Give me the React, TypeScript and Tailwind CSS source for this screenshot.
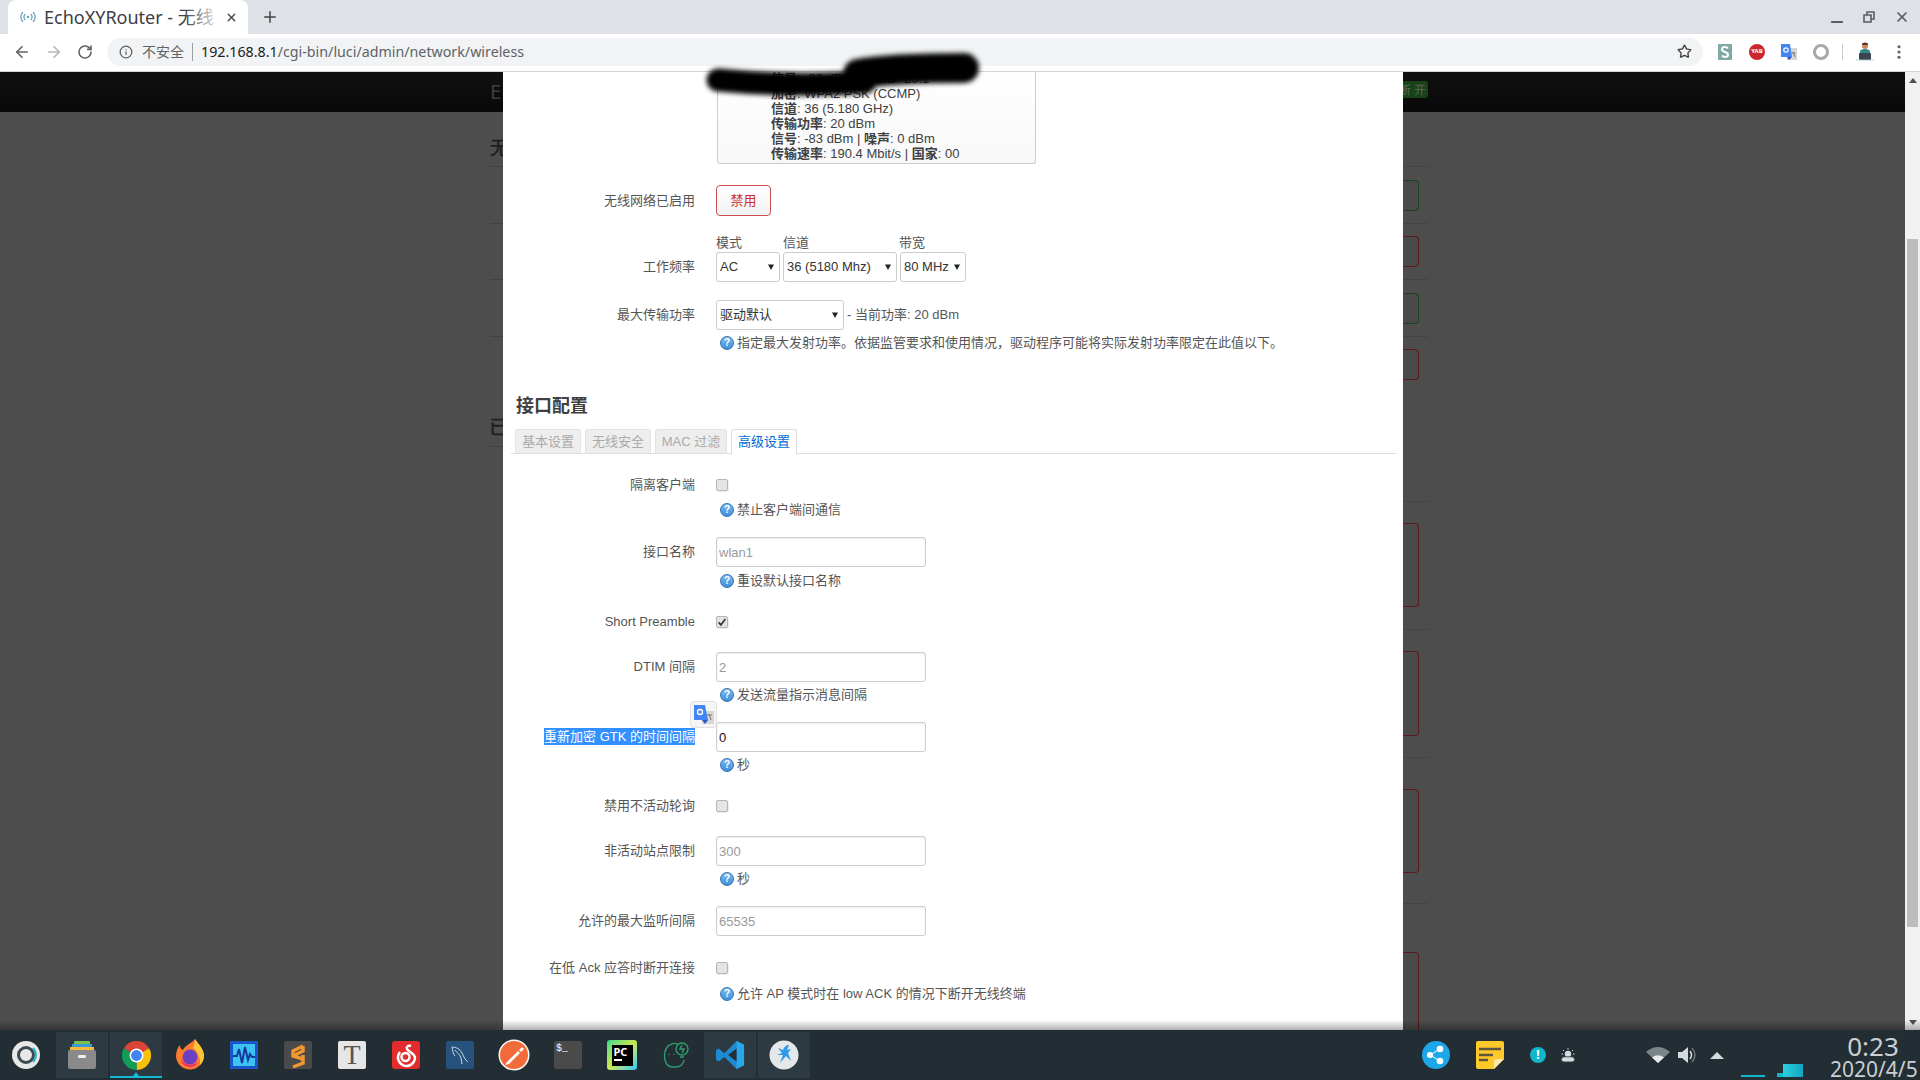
import type { ReactNode } from "react";
import { ArrowLeft, ArrowRight, RotateCw, Info, Star, Minus, X, Plus } from "lucide-react";

// Small help bubble used under most of the form fields
function HelpIcon() {
  return (
    <span className="flex h-[14px] w-[14px] shrink-0 items-center justify-center rounded-full border border-[#2f74b5] bg-gradient-to-b from-[#7db8ec] to-[#3f8fdc] text-[10px] leading-none font-bold text-white">
      ?
    </span>
  );
}

function Help({ className, children }: { className: string; children: ReactNode }) {
  return (
    <div className={`ml-[217px] flex h-4 items-center gap-[3px] text-[13px] whitespace-nowrap text-[#555] ${className}`}>
      <HelpIcon />
      <span>{children}</span>
    </div>
  );
}

function Row({ label, className, children }: { label: ReactNode; className: string; children: ReactNode }) {
  return (
    <div className={`flex items-center ${className}`}>
      <div className="w-[192px] shrink-0 text-right text-[13px] whitespace-nowrap text-[#555]">{label}</div>
      <div className="ml-[21px] flex items-center">{children}</div>
    </div>
  );
}

function Checkbox({ checked }: { checked?: boolean }) {
  return (
    <span className="flex h-[12px] w-[12px] items-center justify-center rounded-[2px] border border-[#b5b5b5] bg-[#e4e4e4] shadow-[1px_1px_0_#eee]">
      {checked && (
        <svg viewBox="0 0 12 12" className="h-[10px] w-[10px]">
          <path d="M2 6.5 4.7 9.5 10 2.5" fill="none" stroke="#333" strokeWidth="2" />
        </svg>
      )}
    </span>
  );
}

function TextBox({ value, placeholder }: { value?: string; placeholder?: string }) {
  return (
    <input
      readOnly
      value={value}
      placeholder={placeholder}
      className="h-[30px] w-[210px] rounded-[3px] border border-[#ccc] bg-white px-[2px] text-[13px] text-[#111] shadow-[inset_0_1px_2px_rgba(0,0,0,0.08)] outline-none placeholder:text-[#999]"
    />
  );
}

function SelectBox({ text, width }: { text: string; width: string }) {
  return (
    <div className={`flex h-[30px] items-center justify-between rounded-[3px] border border-[#ccc] bg-white pr-[4px] pl-[3px] text-[13px] whitespace-nowrap text-[#333] ${width}`}>
      <span>{text}</span>
      <svg viewBox="0 0 8 8" className="h-[8px] w-[8px]">
        <path d="M1 1.5h6L4 7z" fill="#222" />
      </svg>
    </div>
  );
}

function TabBtn({ text, width, active }: { text: string; width: string; active?: boolean }) {
  return (
    <div
      className={
        active
          ? `-mb-px flex h-[25px] items-center justify-center rounded-t-[3px] border border-b-0 border-[#ddd] bg-white text-[13px] text-[#0069d6] ${width}`
          : `flex h-[24px] items-center justify-center rounded-t-[3px] border border-b-0 border-[#e4e4e4] bg-[#eee] text-[13px] text-[#aaa] ${width}`
      }
    >
      {text}
    </div>
  );
}

function TabStrip() {
  return (
    <div className="flex h-[34px] items-end bg-[#dee1e6] pl-[8px] font-['Noto_Sans','Noto_Sans_CJK_SC',sans-serif]">
      <div className="relative flex h-[34px] w-[240px] items-center rounded-t-lg bg-white pl-[12px]">
        <svg viewBox="0 0 16 16" className="h-4 w-4" fill="none" stroke="#6fa6b8" strokeWidth="1.3">
          <circle cx="8" cy="8" r="1.3" fill="#6fa6b8" stroke="none" />
          <path d="M5.3 5a4 4 0 0 0 0 6M10.7 5a4 4 0 0 1 0 6M3 3a7 7 0 0 0 0 10M13 3a7 7 0 0 1 0 10" />
        </svg>
        <div className="ml-[8px] w-[174px] overflow-hidden text-[18px] whitespace-nowrap text-[#3c4043]">EchoXYRouter - 无线</div>
        <div className="absolute top-0 left-[176px] h-[34px] w-[38px] bg-gradient-to-r from-white/0 to-white" />
        <X className="absolute top-[11px] left-[217px] h-[13px] w-[13px] text-[#444]" strokeWidth={2.6} />
      </div>
      <Plus className="mb-[8px] ml-[13px] h-[18px] w-[18px] text-[#444]" strokeWidth={2} />
      <div className="ml-auto flex h-[34px] items-start text-[#5a5d62]">
        <Minus className="mt-[13px] h-[18px] w-[18px]" strokeWidth={2.4} />
        <svg viewBox="0 0 12 12" className="mt-[11px] ml-[17px] h-[12px] w-[12px]" fill="none" stroke="#5a5d62" strokeWidth="1.6">
          <path d="M1 4h7v7H1zM4 4V1h7v7H8" />
        </svg>
        <X className="mt-[9px] mr-[10px] ml-[19px] h-[16px] w-[16px]" strokeWidth={2.6} />
      </div>
    </div>
  );
}

function Toolbar() {
  return (
    <div className="flex h-[38px] items-center border-b border-[#d4d4d4] bg-white pb-[2px] font-['Noto_Sans','Noto_Sans_CJK_SC',sans-serif]">
      <ArrowLeft className="ml-[13px] h-[18px] w-[18px] text-[#5f6368]" strokeWidth={2.2} />
      <ArrowRight className="ml-[14px] h-[18px] w-[18px] text-[#b4b6b9]" strokeWidth={2.2} />
      <RotateCw className="ml-[14px] h-[16px] w-[16px] text-[#5f6368]" strokeWidth={2.4} />
      <div className="ml-[14px] flex h-[28px] w-[1596px] items-center rounded-full bg-[#f1f3f4] pr-[11px] pl-[12px]">
        <Info className="h-[14px] w-[14px] text-[#5f6368]" strokeWidth={2.2} />
        <span className="ml-[9px] text-[14px] text-[#5f6368]">不安全</span>
        <span className="ml-[8px] h-[18px] w-px bg-[#9aa0a6]" />
        <span className="ml-[8px] text-[14.25px] text-[#202124]">
          192.168.8.1<span className="text-[#5f6368]">/cgi-bin/luci/admin/network/wireless</span>
        </span>
        <Star className="ml-auto h-[15px] w-[15px] text-[#444]" strokeWidth={2.2} />
      </div>
      {/* extension icons */}
      <svg viewBox="0 0 16 16" className="ml-[14px] h-4 w-4">
        <rect width="14" height="16" x="1" fill="#7fa8a6" rx="1" />
        <path d="M11 4.5Q10 3 8 3 5 3 5 5.2 5 7 8 8t3 2.8Q11 13 8 13 6 13 5 11.5" fill="none" stroke="#fff" strokeWidth="2" />
      </svg>
      <span className="ml-[16px] flex h-4 w-4 items-center justify-center rounded-full bg-[#c9282d] text-[6px] font-bold text-white">YAB</span>
      <svg viewBox="0 0 16 16" className="ml-[16px] h-4 w-4">
        <rect x="6" y="4" width="10" height="12" fill="#d6d6d6" />
        <path d="M0 0h9l2 13H0z" fill="#4285f4" />
        <path d="M6 13h5l-3 3z" fill="#2a56c6" />
        <circle cx="5" cy="6" r="2.2" fill="none" stroke="#fff" strokeWidth="1.2" />
        <path d="M12 8l2 5M14.5 9h-4" stroke="#777" strokeWidth="1" />
      </svg>
      <span className="ml-[16px] h-4 w-4 rounded-full border-[3px] border-[#a8a8a8] bg-white" />
      <span className="ml-[13px] h-[16px] w-px bg-[#ccc]" />
      <svg viewBox="0 0 20 20" className="ml-[12px] h-[20px] w-[20px]">
        <circle cx="10" cy="4" r="3" fill="#c98b5e" />
        <path d="M7 3a3 2.4 0 0 1 6 0z" fill="#5a3521" />
        <path d="M5 15V10q0-3 5-3t5 3v5z" fill="#2b8a8a" />
        <rect x="4" y="11" width="12" height="7" rx="1" fill="#3c4650" />
        <path d="M1 18h18" stroke="#a9c6c9" strokeWidth="0.8" />
      </svg>
      <svg viewBox="0 0 4 16" className="ml-[22px] h-[14px] w-[4px]" fill="#5f6368">
        <circle cx="2" cy="2" r="1.8" />
        <circle cx="2" cy="8" r="1.8" />
        <circle cx="2" cy="14" r="1.8" />
      </svg>
    </div>
  );
}

// What shows of the dimmed page to the left of the dialog
function BackdropLeft() {
  return (
    <div className="h-full w-[503px] shrink-0 overflow-hidden bg-[#4d4d4d] pl-[490px]">
      <div className="-ml-[490px] h-[40px] w-[503px] bg-gradient-to-b from-[#101010] to-[#090909] pt-[6px] pl-[490px] text-[20px] leading-[28px] text-[#3e3e3e]">
        E
      </div>
      <div className="mt-[23px] h-[31px] w-[30px] text-[18px] leading-[24px] font-bold text-[#1f1f1f]">无</div>
      <div className="h-px bg-[#404040]" />
      <div className="mt-[56px] h-px bg-[#404040]" />
      <div className="mt-[55px] h-px bg-[#404040]" />
      <div className="mt-[56px] h-px bg-[#404040]" />
      <div className="mt-[77px] h-[32px] w-[30px] text-[18px] leading-[24px] font-bold text-[#1f1f1f]">已</div>
      <div className="h-px bg-[#404040]" />
    </div>
  );
}

const Line = ({ className }: { className: string }) => <div className={`h-px w-[25px] bg-[#444] ${className}`} />;

const Card = ({ className }: { className: string }) => (
  <div className={`w-[16px] rounded-r-[4px] border-y border-r bg-[#4a4a4a] ${className}`} />
);

// Same for the right side of the dialog, with the clipped status buttons
function BackdropRight() {
  return (
    <div className="h-full w-[502px] shrink-0 overflow-hidden bg-[#4d4d4d]">
      <div className="flex h-[40px] bg-gradient-to-b from-[#101010] to-[#090909] pt-[9px]">
        <div className="flex h-[17px] w-[25px] items-center justify-end overflow-hidden rounded-r-[3px] bg-[#17421a] pr-[2px] text-[12px] whitespace-nowrap text-[#5d6b5d]">
          断 开
        </div>
      </div>
      <Line className="mt-[54px]" />
      <Card className="mt-[13px] h-[31px] border-[#1c451c]" />
      <Line className="mt-[12px]" />
      <Card className="mt-[12px] h-[31px] border-[#5c1a1a]" />
      <Line className="mt-[12px]" />
      <Card className="mt-[13px] h-[31px] border-[#1c451c]" />
      <Line className="mt-[12px]" />
      <Card className="mt-[12px] h-[31px] border-[#5c1a1a]" />
      <Line className="mt-[121px]" />
      <Card className="mt-[21px] h-[84px] border-[#5c1a1a]" />
      <Line className="mt-[22px]" />
      <Card className="mt-[21px] h-[85px] border-[#5c1a1a]" />
      <Line className="mt-[21px]" />
      <Card className="mt-[31px] h-[84px] border-[#5c1a1a]" />
      <Line className="mt-[30px]" />
      <Card className="mt-[48px] h-[200px] border-[#5c1a1a]" />
    </div>
  );
}

function Dialog() {
  return (
    <div className="h-full w-[900px] shrink-0 overflow-hidden bg-white font-['Liberation_Sans','Noto_Sans_CJK_SC',sans-serif]">
      {/* status box, scrolled partly out of view */}
      <div className="-mt-px ml-[214px] h-[93px] w-[319px] rounded-b-[3px] border-x border-b border-[#ccc] bg-gradient-to-b from-white to-[#f8f8f8] pl-[53px] text-[13px] leading-[15px] whitespace-nowrap text-[#404040]">
        <div>
          <b>信号</b>: -83 dBm <b>BSSID</b>: 20:1
        </div>
        <div>
          <b>加密</b>: WPA2 PSK (CCMP)
        </div>
        <div>
          <b>信道</b>: 36 (5.180 GHz)
        </div>
        <div>
          <b>传输功率</b>: 20 dBm
        </div>
        <div>
          <b>信号</b>: -83 dBm | <b>噪声</b>: 0 dBm
        </div>
        <div>
          <b>传输速率</b>: 190.4 Mbit/s | <b>国家</b>: 00
        </div>
      </div>

      <Row label="无线网络已启用" className="mt-[21px] h-[31px]">
        <button className="h-[31px] w-[55px] rounded-[4px] border border-[#c9504f] bg-gradient-to-b from-white to-[#f3f3f3] text-[13px] text-[#c9302c]">
          禁用
        </button>
      </Row>

      <div className="mt-[18px] flex items-end">
        <div className="flex h-[30px] w-[192px] items-center justify-end text-[13px] text-[#555]">工作频率</div>
        <div className="ml-[21px] flex gap-[3px]">
          <div className="w-[64px] text-[13px] leading-[18px] text-[#555]">
            模式
            <SelectBox text="AC" width="w-[64px]" />
          </div>
          <div className="w-[114px] text-[13px] leading-[18px] text-[#555]">
            信道
            <SelectBox text="36 (5180 Mhz)" width="w-[114px]" />
          </div>
          <div className="w-[66px] text-[13px] leading-[18px] text-[#555]">
            <span className="-ml-px">带宽</span>
            <SelectBox text="80 MHz" width="w-[66px]" />
          </div>
        </div>
      </div>

      <Row label="最大传输功率" className="mt-[18px] h-[30px]">
        <SelectBox text="驱动默认" width="w-[128px]" />
        <span className="ml-[3px] text-[13px] whitespace-nowrap text-[#555]">- 当前功率: 20 dBm</span>
      </Row>
      <Help className="mt-[5px]">指定最大发射功率。依据监管要求和使用情况，驱动程序可能将实际发射功率限定在此值以下。</Help>

      <h3 className="mt-[43px] ml-[13px] text-[18px] leading-[24px] font-bold text-[#404040]">接口配置</h3>

      <div className="mt-[11px] ml-[8px] flex h-[25px] w-[885px] gap-[4px] border-b border-[#ddd] pl-[4px]">
        <TabBtn text="基本设置" width="w-[66px]" />
        <TabBtn text="无线安全" width="w-[66px]" />
        <TabBtn text="MAC 过滤" width="w-[72px]" />
        <TabBtn text="高级设置" width="w-[66px]" active />
      </div>

      <Row label="隔离客户端" className="mt-[22px] h-[18px]">
        <Checkbox />
      </Row>
      <Help className="mt-[8px]">禁止客户端间通信</Help>

      <Row label="接口名称" className="mt-[19px] h-[30px]">
        <TextBox placeholder="wlan1" />
      </Row>
      <Help className="mt-[6px]">重设默认接口名称</Help>

      <Row label="Short Preamble" className="mt-[24px] h-[18px]">
        <Checkbox checked />
      </Row>

      <Row label="DTIM 间隔" className="mt-[21px] h-[30px]">
        <TextBox placeholder="2" />
      </Row>
      <Help className="mt-[5px]">发送流量指示消息间隔</Help>

      <Row
        label={<span className="bg-[#3390ff] py-px text-white">重新加密 GTK 的时间间隔</span>}
        className="mt-[19px] h-[30px]"
      >
        <TextBox value="0" />
      </Row>
      <Help className="mt-[5px]">秒</Help>

      <Row label="禁用不活动轮询" className="mt-[24px] h-[18px]">
        <Checkbox />
      </Row>

      <Row label="非活动站点限制" className="mt-[21px] h-[30px]">
        <TextBox placeholder="300" />
      </Row>
      <Help className="mt-[5px]">秒</Help>

      <Row label="允许的最大监听间隔" className="mt-[19px] h-[30px]">
        <TextBox placeholder="65535" />
      </Row>

      <Row label="在低 Ack 应答时断开连接" className="mt-[23px] h-[18px]">
        <Checkbox />
      </Row>
      <Help className="mt-[9px]">允许 AP 模式时在 low ACK 的情况下断开无线终端</Help>
    </div>
  );
}

function Scrollbar() {
  return (
    <div className="flex h-full w-[15px] shrink-0 flex-col items-center bg-[#f1f1f1]">
      <svg viewBox="0 0 10 6" className="mt-[6px] h-[5px] w-[8px]">
        <path d="M5 0l5 6H0z" fill="#505050" />
      </svg>
      <div className="mt-[156px] h-[688px] w-[11px] bg-[#bdbdbd]" />
      <svg viewBox="0 0 10 6" className="mt-auto mb-[5px] h-[5px] w-[8px]">
        <path d="M0 0h10L5 6z" fill="#505050" />
      </svg>
    </div>
  );
}

function AppSlot({ active, children }: { active?: boolean; children: ReactNode }) {
  return (
    <div className={`flex h-[46px] w-[52px] items-center justify-center ${active ? "bg-[#2d3a41]" : ""}`}>{children}</div>
  );
}

function TaskBar() {
  return (
    <div className="flex h-[50px] items-start justify-between bg-[#232e34] pt-[2px] pl-[2px] font-['Noto_Sans',sans-serif]">
      <div className="flex gap-[2px]">
        <AppSlot>
          <svg viewBox="0 0 30 30" className="h-[30px] w-[30px] -translate-x-[2px]">
            <circle cx="15" cy="15" r="14" fill="#e8e8e8" />
            <circle cx="15" cy="15" r="7.5" fill="none" stroke="#3c4a52" strokeWidth="3" />
            <path d="M22 8a10 10 0 0 1 0 14" fill="none" stroke="#1fb5c4" strokeWidth="2" />
          </svg>
        </AppSlot>
        <AppSlot active>
          <svg viewBox="0 0 28 28" className="h-[30px] w-[28px]">
            <rect x="6" width="16" height="4" rx="1" fill="#7cc24a" />
            <rect x="4" y="3" width="20" height="3" fill="#3b9bd8" />
            <rect x="2" y="6" width="24" height="3" fill="#f5b83a" />
            <rect y="9" width="28" height="19" rx="2" fill="#8a8a8a" />
            <rect x="10" y="14" width="8" height="3" rx="1" fill="#eee" />
          </svg>
        </AppSlot>
        <div className="relative">
          <AppSlot active>
            <svg viewBox="0 0 48 48" className="h-[29px] w-[29px]">
              <path d="M24 24 3.2 12A24 24 0 0 1 44.800 12Z" fill="#db4437" />
              <path d="M24 24 44.800 12A24 24 0 0 1 24 48Z" fill="#f4c20d" />
              <path d="M24 24 24 48A24 24 0 0 1 3.2 12Z" fill="#0f9d58" />
              <circle cx="24" cy="24" r="11.500" fill="#fff" />
              <circle cx="24" cy="24" r="9" fill="#4285f4" />
            </svg>
          </AppSlot>
          <div className="absolute bottom-0 left-0 h-[2px] w-[52px] bg-[#12b8d4]" />
          <svg viewBox="0 0 6 4" className="absolute bottom-[2px] left-[23px] h-[4px] w-[6px]">
            <path d="M3 0l3 4H0z" fill="#12b8d4" />
          </svg>
        </div>
        <AppSlot>
          <svg viewBox="0 0 30 32" className="h-[32px] w-[30px]">
            <path d="M20 0c2 4 8 8 9 16a14 14 0 1 1-28 1C1 12 3 8 5 6c0 3 1 4 3 5 2-5 8-6 12-11z" fill="#ff7a2e" />
            <path d="M20 0c2 4 8 8 9 16 0 5-2 8-4 10 1-8-3-14-7-17 1-3 2-6 2-9z" fill="#ffc53a" />
            <circle cx="15" cy="18" r="7.500" fill="#6a3fc0" />
            <path d="M6 20a9 9 0 0 0 17 3 11 11 0 0 1-17-3z" fill="#e8336d" />
          </svg>
        </AppSlot>
        <AppSlot>
          <svg viewBox="0 0 28 28" className="h-[28px] w-[28px]">
            <rect width="28" height="28" rx="1" fill="#1a56c9" />
            <rect x="3" y="3" width="22" height="22" fill="#3cc3f2" />
            <path d="M3 15h4l2-7 3 14 3-16 3 13 2-6 2 3h3" fill="none" stroke="#123a9c" strokeWidth="2" />
          </svg>
        </AppSlot>
        <AppSlot>
          <svg viewBox="0 0 28 28" className="h-[28px] w-[28px]">
            <rect width="28" height="28" rx="2" fill="#4a4a4a" />
            <path d="M19 5 9 10v5l10 3v4L9 26M19 5v5L9 15M19 14v4" fill="none" stroke="#f0982e" strokeWidth="3.500" />
          </svg>
        </AppSlot>
        <AppSlot>
          <div className="flex h-[28px] w-[28px] items-center justify-center rounded-[2px] bg-[#e6e6e6] font-['Liberation_Serif',serif] text-[28px] leading-none text-[#555]">
            T
          </div>
        </AppSlot>
        <AppSlot>
          <svg viewBox="0 0 28 28" className="h-[28px] w-[28px]">
            <rect width="28" height="28" rx="3" fill="#e22c2e" />
            <circle cx="13.500" cy="16" r="4" fill="none" stroke="#fff" strokeWidth="2.500" />
            <path d="M19 5c-3-1-5 1-4 3 1 3 8 4 8 9a8.500 8.500 0 1 1-15-6" fill="none" stroke="#fff" strokeWidth="2.500" />
          </svg>
        </AppSlot>
        <AppSlot>
          <svg viewBox="0 0 28 28" className="h-[28px] w-[28px]">
            <rect width="28" height="28" rx="2" fill="#27527e" />
            <path d="M6 6c4 0 8 2 10 6s3 7 6 9M6 6c1 4 1 7 3 9M9 9c2 3 5 4 6 8l1 6" fill="none" stroke="#c9d6e0" strokeWidth="1" />
          </svg>
        </AppSlot>
        <AppSlot>
          <svg viewBox="0 0 32 32" className="h-[32px] w-[32px]">
            <circle cx="16" cy="16" r="15.500" fill="#fff" />
            <circle cx="16" cy="16" r="14" fill="#f26b3a" />
            <path d="M9 23l11-11 2 2-11 11-4 1zM21 11l3-3 2 2-3 3z" fill="#fff" />
          </svg>
        </AppSlot>
        <AppSlot>
          <div className="h-[28px] w-[28px] rounded-[2px] bg-[#4a4a4a] pt-[2px] pl-[2px] font-['Liberation_Mono',monospace] text-[10px] leading-[12px] text-white">
            $_
          </div>
        </AppSlot>
        <AppSlot>
          <div className="relative flex h-[30px] w-[30px] items-center justify-center rounded-[3px] bg-gradient-to-br from-[#21d789] via-[#c8e84a] to-[#07c3f2]">
            <div className="h-[21px] w-[21px] bg-black pl-[2px] text-[11px] leading-[13px] font-bold text-white">
              PC
              <div className="mt-[1px] h-[2px] w-[8px] bg-white" />
            </div>
          </div>
        </AppSlot>
        <AppSlot>
          <svg viewBox="0 0 30 30" className="h-[30px] w-[30px]" fill="none" stroke="#2f9e6e" strokeWidth="1.400">
            <path d="M17 4Q12 2 7 6 2 12 4 20q2 8 10 7 8 0 9-7" />
            <circle cx="21" cy="9" r="6" />
            <path d="M21 5l-2 4h4l-2 4M19 17h4M8 14v1M13 14v1" />
          </svg>
        </AppSlot>
        <AppSlot active>
          <svg viewBox="0 0 32 32" className="h-[30px] w-[30px]">
            <path d="M23 1 31 5v22l-8 4L10 18l-6 5-3-2v-10l3-2 6 5z" fill="#1f8ad2" />
            <path d="M23 1 31 5v22l-8 4z" fill="#2aa5ea" />
            <path d="M23 9v14l-9-7z" fill="#232e34" />
          </svg>
        </AppSlot>
        <AppSlot active>
          <svg viewBox="0 0 30 30" className="h-[30px] w-[30px]">
            <circle cx="15" cy="15" r="14.500" fill="#e4e8ea" />
            <path d="M20 5c-3 0-5 2-6 5L9 8l4 5-5 2 6 0-3 8 6-7 5 5-3-8 3-4-4 1z" fill="#2d9be8" />
          </svg>
        </AppSlot>
      </div>

      {/* system tray */}
      <div className="flex h-[46px] items-center pr-[4px]">
        <svg viewBox="0 0 28 28" className="h-[28px] w-[28px]">
          <circle cx="14" cy="14" r="14" fill="#1ea7e8" />
          <circle cx="8" cy="14" r="3" fill="#fff" />
          <circle cx="18" cy="8" r="3.300" fill="#fff" />
          <circle cx="18" cy="20" r="3.300" fill="#fff" />
          <path d="M8 14 18 8M8 14l10 6" stroke="#fff" strokeWidth="1" />
        </svg>
        <svg viewBox="0 0 28 28" className="ml-[26px] h-[28px] w-[28px]">
          <path d="M2 0h24q2 0 2 2v16L18 28H2q-2 0-2-2V2q0-2 2-2z" fill="#ffc929" />
          <path d="M28 18 18 28V20q0-2 2-2z" fill="#ffe9a8" />
          <path d="M3 8h22M3 14h14M3 19h9" stroke="#5c5540" strokeWidth="2.500" />
        </svg>
        <span className="ml-[26px] flex h-4 w-4 items-center justify-center rounded-full bg-[#12b5cb] text-[12px] leading-none font-bold text-white">
          !
        </span>
        <svg viewBox="0 0 14 14" className="ml-[15px] h-[14px] w-[14px]" fill="#d5dadc">
          <circle cx="7" cy="6" r="3.200" />
          <path d="M7 0v1.500M2 2l1 1M12 2l-1 1M0.500 6H2M12 6h1.500" stroke="#d5dadc" strokeWidth="1" />
          <path d="M3 14a2.600 2.600 0 0 1 0-5.200h8a2.600 2.600 0 0 1 0 5.200z" stroke="#232e34" strokeWidth="0.800" />
        </svg>
        <svg viewBox="0 0 24 16" className="ml-[71px] h-[16px] w-[24px]">
          <path d="M0 5Q12-5 24 5L12 16z" fill="#7b8488" />
          <path d="M6 10.500Q12 6 18 10.500L12 16z" fill="#e6e9ea" />
        </svg>
        <svg viewBox="0 0 20 18" className="ml-[8px] h-[18px] w-[20px]" fill="none">
          <path d="M0 6h4l6-5v16l-6-5H0z" fill="#d5dadc" />
          <path d="M12 5q3 4 0 8" stroke="#d5dadc" strokeWidth="1.500" />
          <path d="M14 2q6 7 0 14" stroke="#6b7478" strokeWidth="1.500" />
        </svg>
        <svg viewBox="0 0 14 7" className="ml-[12px] h-[7px] w-[14px]">
          <path d="M7 0l7 7H0z" fill="#d5dadc" />
        </svg>
        <div className="ml-[17px] flex h-[45px] w-[62px] items-end self-start">
          <div className="h-[2px] w-[24px] bg-[#12b5cb]" />
          <div className="ml-[12px] h-[4px] w-[6px] bg-[#12b5cb]" />
          <div className="h-[13px] w-[20px] bg-gradient-to-r from-[#2bd0e0] to-[#12a5c0]" />
        </div>
        <div className="ml-[27px] h-[46px] w-[86px] self-start pt-px text-center text-[#c9cfd2]">
          <div className="text-[26px] leading-[26px]">0:23</div>
          <div className="text-[21px] leading-[20px] whitespace-nowrap">2020/4/5</div>
        </div>
      </div>
    </div>
  );
}

export default function App() {
  return (
    <div className="relative flex h-[1080px] w-[1920px] flex-col overflow-hidden">
      <TabStrip />
      <Toolbar />
      <div className="relative flex h-[958px]">
        <BackdropLeft />
        <Dialog />
        <BackdropRight />
        <Scrollbar />
        {/* shadow the panel throws on the page */}
        <div className="absolute right-0 bottom-0 left-0 h-[10px] bg-gradient-to-b from-black/0 to-black/30" />
      </div>
      <TaskBar />

      {/* redaction scribble over the SSID */}
      <svg viewBox="0 0 290 60" className="absolute top-[46px] left-[700px] h-[60px] w-[290px] blur-[2.5px]">
        <path d="M18 34C60 38 120 40 165 36" fill="none" stroke="#000" strokeWidth="23" strokeLinecap="round" />
        <path d="M158 28C190 22 235 22 264 22" fill="none" stroke="#000" strokeWidth="30" strokeLinecap="round" />
      </svg>

      {/* Google translate bubble next to the selected text */}
      <div className="absolute top-[701px] left-[690px] flex h-[27px] w-[27px] items-center justify-center rounded-[4px] border border-[#e0e0e0] bg-[#f5f5f5]">
        <svg viewBox="0 0 20 20" className="h-[20px] w-[20px]">
          <rect x="8" y="6" width="12" height="13" fill="#d6d6d6" />
          <path d="M0 0h11l3 15H0z" fill="#4285f4" />
          <path d="M8 15h6l-3 4z" fill="#2a56c6" />
          <circle cx="6" cy="7" r="2.500" fill="none" stroke="#fff" strokeWidth="1.400" />
          <path d="M15 9l2 6M18 10h-5" stroke="#777" strokeWidth="1" />
        </svg>
      </div>
    </div>
  );
}
